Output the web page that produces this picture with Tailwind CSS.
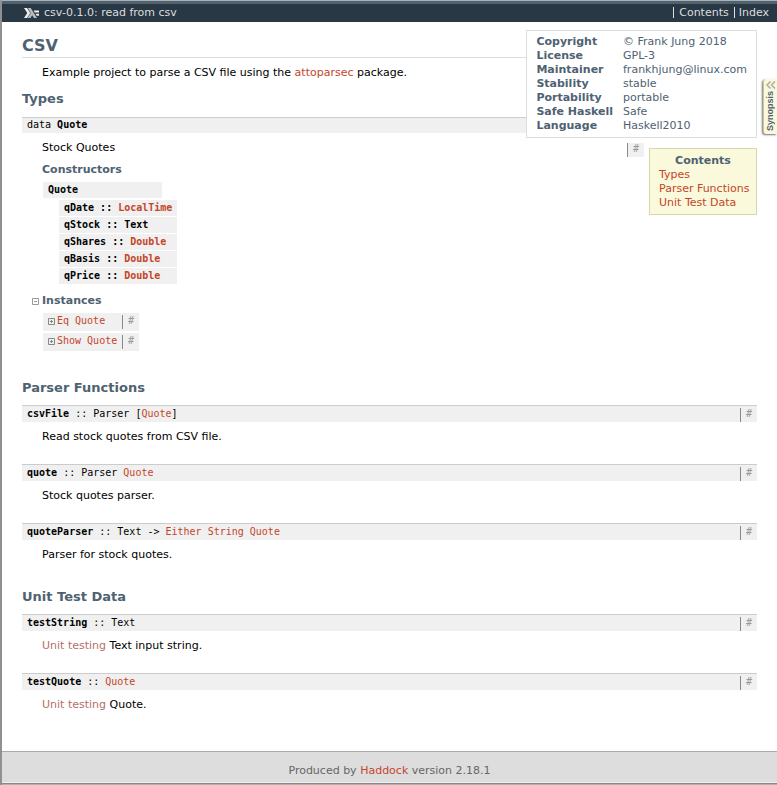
<!DOCTYPE html>
<html lang="en">
<head>
<meta charset="utf-8">
<title>CSV</title>
<script src="https://cdn.jsdelivr.net/npm/@tailwindcss/browser@4"></script>
</head>
<body class="min-h-screen bg-white font-['DejaVu_Sans',sans-serif] text-[11px] leading-[14px] text-black">
<div class="relative flex min-h-screen flex-col border-t border-l-2 border-t-[#b0b0b0] border-l-[#909090]">
  <header class="flex h-[21px] items-center justify-between border-t-3 border-[#4e6272] bg-[#293845] pr-2 pl-[22px] text-[#ddd]">
    <p class="flex items-center gap-[5px]">
      <svg class="h-[10px] w-[15px]" viewBox="0 0 15 10" aria-hidden="true">
        <path fill="#eee" d="M0 0h3l3.300 5L3 10H0l3.300-5z"/>
        <path fill="#bbb" d="M3.700 0h3l6.300 10h-3L8.200 7.200 6.500 10h-3l3.300-5z"/>
        <path fill="#eee" d="M9.500 2.500H15v2h-4.200zM11.500 5.800H15v2h-2.200z"/>
      </svg>
      <span>csv-0.1.0: read from csv</span>
    </p>
    <nav class="flex pb-px">
      <a href="#contents" class="border-l border-[#ddd] px-[5px] leading-[11px]">Contents</a>
      <a href="#index" class="border-l border-[#ddd] pl-[4px] leading-[11px]">Index</a>
    </nav>
  </header>

  <main class="flex-1 pr-5 pl-5">
    <div class="absolute top-[29px] right-5 border border-[#ddd] bg-white px-[9px] py-1 text-[#4e6272]">
      <table class="text-left">
        <tbody>
          <tr><th class="p-0 pr-[10px] font-bold">Copyright</th><td>© Frank Jung 2018</td></tr>
          <tr><th class="p-0 pr-[10px] font-bold">License</th><td>GPL-3</td></tr>
          <tr><th class="p-0 pr-[10px] font-bold">Maintainer</th><td>frankhjung@linux.com</td></tr>
          <tr><th class="p-0 pr-[10px] font-bold">Stability</th><td>stable</td></tr>
          <tr><th class="p-0 pr-[10px] font-bold">Portability</th><td>portable</td></tr>
          <tr><th class="p-0 pr-[10px] font-bold">Safe Haskell</th><td>Safe</td></tr>
          <tr><th class="p-0 pr-[10px] font-bold">Language</th><td>Haskell2010</td></tr>
        </tbody>
      </table>
    </div>

    <h1 class="mt-[14px] border-b border-[#ddd] pb-[2px] text-[16px] leading-[19px] font-bold text-[#4e6272]">CSV</h1>
    <p class="mt-2 ml-5">Example project to parse a CSV file using the <a href="#attoparsec" class="text-[#c4452a]">attoparsec</a> package.</p>

    <section id="types">
      <h2 class="mt-[11px] text-[13px] leading-4 font-bold text-[#4e6272]">Types</h2>
      <p class="mt-[10px] border-t border-[#ccc] bg-[#f0f0f0] px-[5px] pb-px font-['DejaVu_Sans_Mono',monospace] text-[10px]">data <b>Quote</b></p>
      <div class="mt-[7px] flex items-start">
        <div class="ml-5 flex-1 pt-px">
          <p>Stock Quotes</p>
          <h3 class="mt-2 font-bold text-[#4e6272]">Constructors</h3>
          <div class="mt-[5px] ml-px font-['DejaVu_Sans_Mono',monospace] text-[10px] font-bold">
            <p class="h-4 w-[119px] bg-[#f0f0f0] px-[5px] pt-px">Quote</p>
            <ul class="mt-[2px] ml-4 flex w-[118px] flex-col gap-px whitespace-nowrap">
              <li class="h-4 bg-[#f0f0f0] pt-px pl-[5px]">qDate :: <a href="#LocalTime" class="text-[#c4452a]">LocalTime</a></li>
              <li class="h-4 bg-[#f0f0f0] pt-px pl-[5px]">qStock :: Text</li>
              <li class="h-4 bg-[#f0f0f0] pt-px pl-[5px]">qShares :: <a href="#Double" class="text-[#c4452a]">Double</a></li>
              <li class="h-4 bg-[#f0f0f0] pt-px pl-[5px]">qBasis :: <a href="#Double" class="text-[#c4452a]">Double</a></li>
              <li class="h-4 bg-[#f0f0f0] pt-px pl-[5px]">qPrice :: <a href="#Double" class="text-[#c4452a]">Double</a></li>
            </ul>
          </div>
          <h3 class="mt-[10px] -ml-[10px] font-bold text-[#4e6272]">
            <button type="button" class="flex items-center gap-[3px]">
              <svg class="size-[7px]" viewBox="0 0 7 7" aria-hidden="true"><path fill="none" stroke="#999" d="M.5.5h6v6h-6zM2 3.500h3"/></svg>
              Instances
            </button>
          </h3>
          <ul class="mt-[5px] ml-px flex w-24 flex-col gap-[2px] font-['DejaVu_Sans_Mono',monospace] text-[10px]">
            <li class="flex h-[18px] items-start justify-between bg-[#f0f0f0] pl-[5px]">
              <span class="flex items-center gap-[2px] pt-px">
                <button type="button" aria-label="Expand Eq Quote"><svg class="size-[7px]" viewBox="0 0 7 7" aria-hidden="true"><path fill="none" stroke="#888" d="M.5.5h6v6h-6zM2 3.500h3M3.500 2v3"/></svg></button>
                <a href="#Quote" class="text-[#c4452a]">Eq Quote</a>
              </span>
              <a href="#eq" class="mt-[2px] w-[17px] border-l border-[#888] pl-[5px] text-[#999]"><span class="-mt-px block pb-px">#</span></a>
            </li>
            <li class="flex h-[18px] items-start justify-between bg-[#f0f0f0] pl-[5px]">
              <span class="flex items-center gap-[2px] pt-px">
                <button type="button" aria-label="Expand Show Quote"><svg class="size-[7px]" viewBox="0 0 7 7" aria-hidden="true"><path fill="none" stroke="#888" d="M.5.5h6v6h-6zM2 3.500h3M3.500 2v3"/></svg></button>
                <a href="#Quote" class="text-[#c4452a]">Show Quote</a>
              </span>
              <a href="#show" class="mt-[2px] w-[17px] border-l border-[#888] pl-[5px] text-[#999]"><span class="-mt-px block pb-px">#</span></a>
            </li>
          </ul>
        </div>
        <a href="#quote-data" class="mt-[3px] mr-[5px] w-[17px] border-l border-[#888] bg-[#f0f0f0] pl-[5px] font-['DejaVu_Sans_Mono',monospace] text-[10px] text-[#999]"><span class="-mt-px block pb-px">#</span></a>
        <nav id="contents" class="mt-2 w-[108px] border border-[#d8d7ad] bg-[#faf9dc] px-[9px] pt-[5px] pb-1 whitespace-nowrap">
          <p class="text-center font-bold text-[#4e6272]">Contents</p>
          <ul class="text-[#c4452a]">
            <li><a href="#types">Types</a></li>
            <li><a href="#parsers">Parser Functions</a></li>
            <li><a href="#tests">Unit Test Data</a></li>
          </ul>
        </nav>
      </div>
    </section>

    <section id="parsers" class="mt-[29px]">
      <h2 class="mb-[9px] text-[13px] leading-4 font-bold text-[#4e6272]">Parser Functions</h2>
      <div class="flex flex-col gap-5">
        <article>
          <div class="flex justify-between border-t border-[#ccc] bg-[#f0f0f0] pl-[5px] font-['DejaVu_Sans_Mono',monospace] text-[10px]">
            <p class="py-px"><b>csvFile</b> :: Parser [<a href="#Quote" class="text-[#c4452a]">Quote</a>]</p>
            <a href="#csvFile" class="mt-[2px] w-[17px] border-l border-[#888] pl-[5px] text-[#999]"><span class="-mt-px block">#</span></a>
          </div>
          <p class="mt-2 ml-5">Read stock quotes from CSV file.</p>
        </article>
        <article>
          <div class="flex justify-between border-t border-[#ccc] bg-[#f0f0f0] pl-[5px] font-['DejaVu_Sans_Mono',monospace] text-[10px]">
            <p class="py-px"><b>quote</b> :: Parser <a href="#Quote" class="text-[#c4452a]">Quote</a></p>
            <a href="#quote" class="mt-[2px] w-[17px] border-l border-[#888] pl-[5px] text-[#999]"><span class="-mt-px block">#</span></a>
          </div>
          <p class="mt-2 ml-5">Stock quotes parser.</p>
        </article>
        <article>
          <div class="flex justify-between border-t border-[#ccc] bg-[#f0f0f0] pl-[5px] font-['DejaVu_Sans_Mono',monospace] text-[10px]">
            <p class="py-px"><b>quoteParser</b> :: Text -&gt; <a href="#Either" class="text-[#c4452a]">Either</a> <a href="#String" class="text-[#c4452a]">String</a> <a href="#Quote" class="text-[#c4452a]">Quote</a></p>
            <a href="#quoteParser" class="mt-[2px] w-[17px] border-l border-[#888] pl-[5px] text-[#999]"><span class="-mt-px block">#</span></a>
          </div>
          <p class="mt-2 ml-5">Parser for stock quotes.</p>
        </article>
      </div>
    </section>

    <section id="tests" class="mt-[27px] mb-9">
      <h2 class="mb-[9px] text-[13px] leading-4 font-bold text-[#4e6272]">Unit Test Data</h2>
      <div class="flex flex-col gap-5">
        <article>
          <div class="flex justify-between border-t border-[#ccc] bg-[#f0f0f0] pl-[5px] font-['DejaVu_Sans_Mono',monospace] text-[10px]">
            <p class="py-px"><b>testString</b> :: Text</p>
            <a href="#testString" class="mt-[2px] w-[17px] border-l border-[#888] pl-[5px] text-[#999]"><span class="-mt-px block">#</span></a>
          </div>
          <p class="mt-2 ml-5"><a href="#unit" class="text-[#b37068]">Unit testing</a> Text input string.</p>
        </article>
        <article>
          <div class="flex justify-between border-t border-[#ccc] bg-[#f0f0f0] pl-[5px] font-['DejaVu_Sans_Mono',monospace] text-[10px]">
            <p class="py-px"><b>testQuote</b> :: <a href="#Quote" class="text-[#c4452a]">Quote</a></p>
            <a href="#testQuote" class="mt-[2px] w-[17px] border-l border-[#888] pl-[5px] text-[#999]"><span class="-mt-px block">#</span></a>
          </div>
          <p class="mt-2 ml-5"><a href="#unit" class="text-[#b37068]">Unit testing</a> Quote.</p>
        </article>
      </div>
    </section>
  </main>

  <a href="#synopsis" class="absolute top-[78px] right-0 flex w-[14px] flex-col items-center rounded-l-[3px] border-l border-[#c8c6a0] bg-[#faf9dc] pt-[2px] pb-[3px] shadow-[-1px_1px_2px_#777]">
    <svg class="h-2 w-[10px]" viewBox="0 0 10 8" aria-hidden="true"><path fill="none" stroke="#aaa" stroke-width="1.500" d="M4.500.5 1 4l3.500 3.500M9 .5 5.500 4 9 7.500"/></svg>
    <span class="mt-[2px] rotate-180 font-['Liberation_Sans',sans-serif] text-[9px] leading-[11px] font-bold text-[#4e6272] [writing-mode:vertical-rl]">Synopsis</span>
  </a>

  <footer class="border-t border-[#aaa] bg-[#ddd] pt-3 pb-1 text-center text-[#666]">
    Produced by <a href="#haddock" class="text-[#c4452a]">Haddock</a> version 2.18.1
  </footer>
  <div class="h-[3px] border-t border-b border-t-[#eee] border-b-[#b0b0b0] bg-[#888]"></div>
</div>
</body>
</html>
